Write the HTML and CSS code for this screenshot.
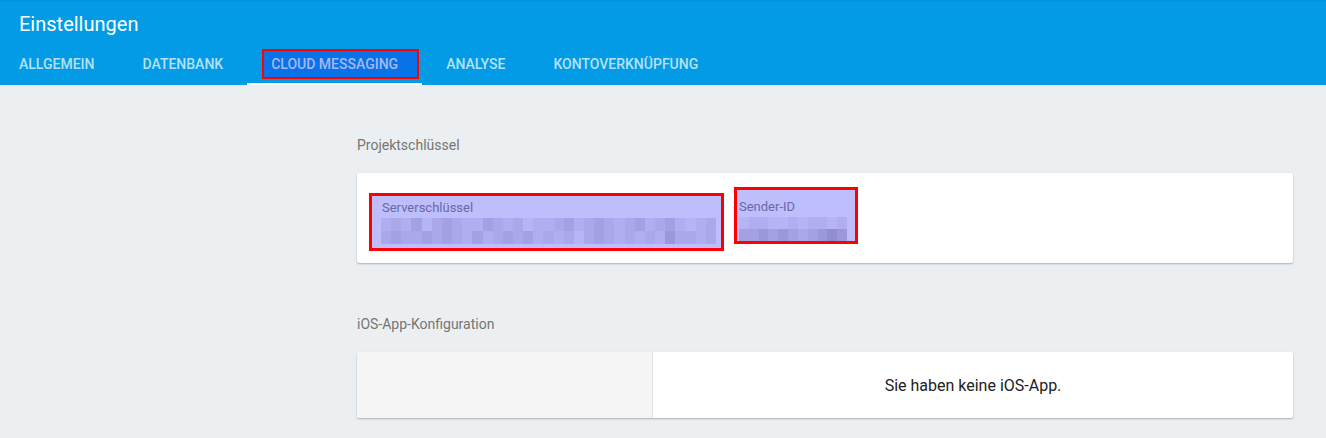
FILE: index.html
```html
<!DOCTYPE html>
<html lang="de">
<head>
<meta charset="utf-8">
<title>Einstellungen</title>
<link rel="stylesheet" href="styles.css">
</head>
<body>
<header class="appbar">
  <h1 class="title">Einstellungen</h1>
  <nav class="tabs">
    <a class="tab first">ALLGEMEIN</a>
    <a class="tab">DATENBANK</a>
    <a class="tab active"><span class="mark-tab">CLOUD MESSAGING</span></a>
    <a class="tab">ANALYSE</a>
    <a class="tab">KONTOVERKNÜPFUNG</a>
  </nav>
</header>
<main class="page">
  <div class="side"></div>
  <div class="content">
    <h2 class="section-label">Projektschlüssel</h2>
    <section class="card keys">
      <div class="mark key-server">
        <div class="key-label">Serverschlüssel</div>
        <div class="pix pix-server">
          <i class="p2"></i><i class="p3"></i><i class="p2"></i><i class="p4"></i><i class="p1"></i><i class="p3"></i><i class="p4"></i><i class="p3"></i><i class="p2"></i><i class="p2"></i><i class="p4"></i><i class="p3"></i><i class="p2"></i><i class="p3"></i><i class="p1"></i><i class="p2"></i><i class="p2"></i><i class="p3"></i><i class="p4"></i><i class="p2"></i><i class="p3"></i><i class="p4"></i><i class="p3"></i><i class="p2"></i><i class="p3"></i><i class="p4"></i><i class="p2"></i><i class="p3"></i><i class="p4"></i><i class="p2"></i><i class="p1"></i><i class="p2"></i><i class="p3"></i>
          <i class="p3"></i><i class="p4"></i><i class="p3"></i><i class="p3"></i><i class="p4"></i><i class="p3"></i><i class="p4"></i><i class="p3"></i><i class="p2"></i><i class="p4"></i><i class="p2"></i><i class="p3"></i><i class="p4"></i><i class="p3"></i><i class="p4"></i><i class="p2"></i><i class="p3"></i><i class="p2"></i><i class="p3"></i><i class="p1"></i><i class="p3"></i><i class="p4"></i><i class="p3"></i><i class="p2"></i><i class="p3"></i><i class="p2"></i><i class="p3"></i><i class="p2"></i><i class="p5"></i><i class="p3"></i><i class="p3"></i><i class="p2"></i><i class="p3"></i>
        </div>
      </div>
      <div class="mark key-sender">
        <div class="key-label">Sender-ID</div>
        <div class="pix pix-sender">
          <i class="p1"></i><i class="p2"></i><i class="p2"></i><i class="p1"></i><i class="p1"></i><i class="p2"></i><i class="p1"></i><i class="p2"></i><i class="p2"></i><i class="p1"></i><i class="p2"></i>
          <i class="p4"></i><i class="p4"></i><i class="p5"></i><i class="p4"></i><i class="p5"></i><i class="p4"></i><i class="p3"></i><i class="p4"></i><i class="p5"></i><i class="p6"></i><i class="p5"></i>
        </div>
      </div>
    </section>
    <h2 class="section-label">iOS-App-Konfiguration</h2>
    <section class="card ios">
      <div class="ios-side"></div>
      <div class="ios-main">Sie haben keine iOS-App.</div>
    </section>
  </div>
</main>
</body>
</html>
```
FILE: styles.css
```css
* { box-sizing: border-box; }
html, body { margin: 0; padding: 0; }
body {
  font-family: Roboto, "Liberation Sans", Arial, sans-serif;
  background: #eceff1;
  width: 1326px;
  height: 438px;
  overflow: hidden;
}
.appbar {
  background: #039be5;
  height: 85px;
  box-shadow: inset 0 2px 0 #0393da;
}
.title {
  margin: 0;
  padding: 12px 0 0 19px;
  height: 36px;
  font-size: 20px;
  line-height: 24px;
  font-weight: 400;
  color: #fff;
}
.tabs {
  display: flex;
  height: 49px;
}
.tab {
  display: block;
  padding: 18px 24px 11px;
  font-size: 14px;
  line-height: 20px;
  font-weight: 500;
  color: #b3e1f7;
  white-space: nowrap;
}
.tab.first { padding-left: 19px; }
.tab.active {
  padding: 13px 3px 4px 15px;
  border-bottom: 2px solid #fff;
}
.mark-tab {
  display: inline-block;
  border: 2px solid #f00;
  background: #0873e8;
  color: #a8b6f6;
  padding: 3px 19px 3px 7px;
  line-height: 20px;
}
.page {
  display: flex;
}
.side { width: 357px; flex: none; }
.content {
  flex: 1;
  padding: 50px 33px 0 0;
}
.section-label {
  margin: 0 0 18px;
  font-size: 14px;
  line-height: 20px;
  font-weight: 400;
  color: #757575;
}
.card {
  background: #fff;
  border-radius: 2px;
  box-shadow: 0 1px 2px rgba(0,0,0,0.28);
}
.keys {
  height: 90px;
  display: flex;
  align-items: flex-start;
  margin-bottom: 51px;
}
.mark {
  border: 3px solid #f00;
  background: #bebefc;
}
.key-server {
  width: 355px;
  height: 58px;
  margin: 20px 0 0 12px;
  padding: 1px 5px 0 9px;
}
.key-sender {
  width: 124px;
  height: 57px;
  margin: 14px 0 0 10px;
  padding: 1px 8px 0 1px;
}
.key-label {
  font-size: 13px;
  line-height: 18px;
  color: #6b68a6;
  padding-left: 1px;
}
.key-server .key-label { margin-top: 2px; margin-bottom: 1px; }
.key-sender .key-label { margin-top: 7px; margin-bottom: 1px; }
.pix { display: grid; }
.pix-server {
  grid-template-columns: repeat(33, 1fr);
  grid-template-rows: 13px 13px;
  height: 26px;
}
.pix-sender {
  grid-template-columns: repeat(11, 1fr);
  grid-template-rows: 12px 12px;
  height: 24px;
  margin-left: 1px;
}
.pix i { display: block; }
.p1 { background: #b6b4f4; }
.p2 { background: #b0aef0; }
.p3 { background: #aaa7ea; }
.p4 { background: #a4a0e4; }
.p5 { background: #9c97dc; }
.p6 { background: #928cd2; }
.ios {
  height: 66px;
  display: flex;
}
.ios-side {
  width: 296px;
  background: #f5f5f5;
  border-right: 1px solid #e0e0e0;
  border-radius: 2px 0 0 2px;
}
.ios-main {
  flex: 1;
  display: flex;
  align-items: center;
  justify-content: center;
  font-size: 16px;
  color: #212121;
}
```
